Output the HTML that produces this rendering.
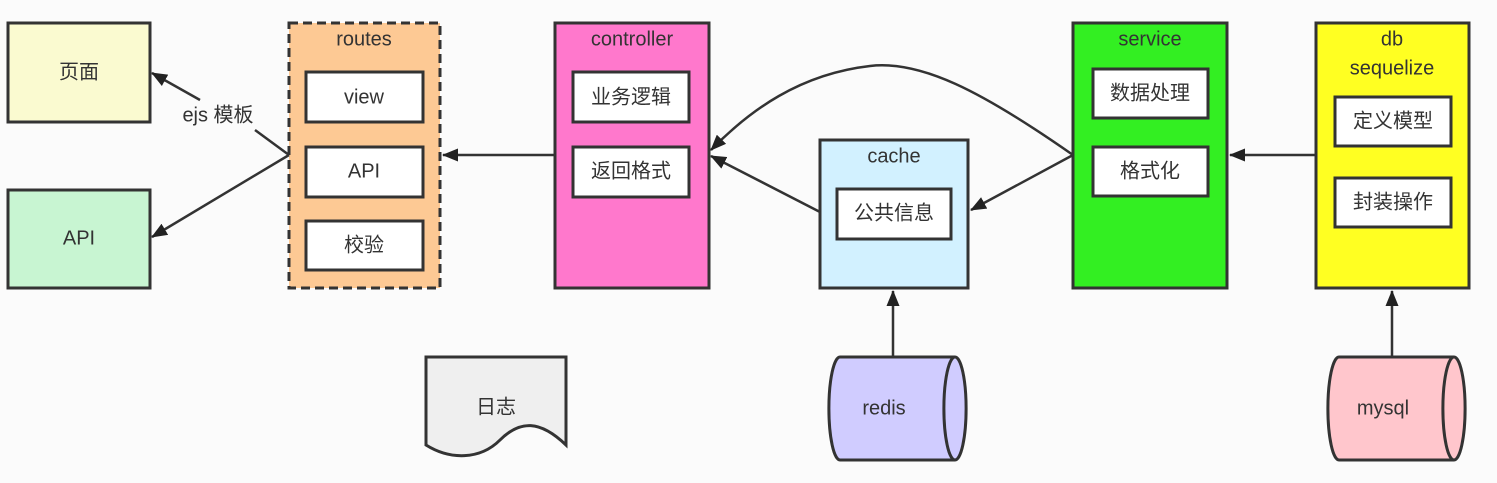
<!DOCTYPE html>
<html><head><meta charset="utf-8"><style>
body{margin:0;background:#fbfbfb;}
svg text{font-family:"Liberation Sans","Noto Sans CJK SC",sans-serif;font-size:20px;text-anchor:middle;dominant-baseline:middle;fill:#333}
</style></head><body>
<svg width="1497" height="478" viewBox="0 0 1497 478" xmlns="http://www.w3.org/2000/svg">
<defs><marker id="a" markerWidth="16" markerHeight="13" refX="15" refY="6.5" orient="auto" markerUnits="userSpaceOnUse"><path d="M0,0 L16,6.5 L0,13 Z" fill="#222"/></marker></defs>
<g stroke="#333" stroke-width="3">
<rect x="8" y="23" width="142" height="99" fill="#fafad0"/>
<rect x="8" y="190" width="142" height="98" fill="#c8f5d2"/>
<rect x="289" y="23" width="151" height="265" fill="#fdc994" stroke-dasharray="9,5"/>
<rect x="555" y="23" width="154" height="265" fill="#ff78cc"/>
<rect x="820" y="140" width="148" height="148" fill="#d2f1ff"/>
<rect x="1073" y="23" width="154" height="265" fill="#33ef22"/>
<rect x="1316" y="23" width="153" height="265" fill="#ffff22"/>
<g fill="#fff">
<rect x="306" y="72" width="117" height="50"/><rect x="306" y="147" width="117" height="50"/><rect x="306" y="221" width="117" height="49"/>
<rect x="573" y="72" width="116" height="50"/><rect x="573" y="147" width="116" height="50"/>
<rect x="837" y="189" width="114" height="50"/>
<rect x="1093" y="69" width="115" height="49"/><rect x="1093" y="147" width="115" height="49"/>
<rect x="1335" y="97" width="116" height="49"/><rect x="1335" y="178" width="116" height="49"/>
</g>
<path d="M426,357 H566 V445 C540,420 520,420 500,440 C480,460 450,460 426,445 Z" fill="#efefef"/>
<path d="M840,357 H955 A11,51 0 0 1 955,460 H840 A11,51 0 0 1 840,357 Z" fill="#d0ccff"/>
<path d="M955,357 A11,51 0 0 0 955,460" fill="none"/>
<path d="M1339,357 H1454 A11,51 0 0 1 1454,460 H1339 A11,51 0 0 1 1339,357 Z" fill="#ffc6cc"/>
<path d="M1454,357 A11,51 0 0 0 1454,460" fill="none"/>
</g>
<g stroke="#333" stroke-width="2.5" fill="none">
<path d="M289,155 L255,130"/>
</g>
<g stroke="#333" stroke-width="2.5" fill="none" marker-end="url(#a)">
<path d="M555,155 H443"/>
<path d="M1316,155 H1230"/>
<path d="M1073,155 L971,210"/>
<path d="M820,212 L711,156"/>
<path d="M1073,155 C980,90 920,60 870,66 C800,74 750,110 711,150"/>
<path d="M200,100 L152,73"/>
<path d="M289,155 L152,237"/>
<path d="M893,357 V291"/>
<path d="M1392,357 V291"/>
</g>
<text x="218" y="116">ejs 模板</text>
<text x="79" y="73">页面</text><text x="79" y="239">API</text>
<text x="364" y="40">routes</text><text x="364" y="98">view</text><text x="364" y="172">API</text><text x="364" y="246">校验</text>
<text x="632" y="40">controller</text><text x="631" y="98">业务逻辑</text><text x="631" y="172">返回格式</text>
<text x="894" y="157">cache</text><text x="894" y="214">公共信息</text>
<text x="1150" y="40">service</text><text x="1150" y="94">数据处理</text><text x="1150" y="172">格式化</text>
<text x="1392" y="40">db</text><text x="1392" y="69">sequelize</text><text x="1393" y="122">定义模型</text><text x="1393" y="203">封装操作</text>
<text x="496" y="408">日志</text><text x="884" y="409">redis</text><text x="1383" y="409">mysql</text>
</svg>
</body></html>
